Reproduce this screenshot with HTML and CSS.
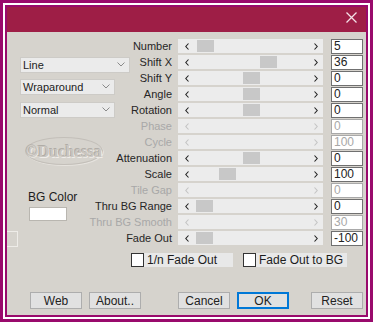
FILE: index.html
```html
<!DOCTYPE html>
<html>
<head>
    <meta name="viewport" content="width=device-width, initial-scale=1.0">
    <title>Line Filter</title>
    <link rel="stylesheet" href="styles.css">
</head>
<body>
<div class="frame">
  <div class="frame-inner">
    <div class="window">
      <div class="titlebar">
        <svg class="close" width="11" height="11" viewBox="0 0 11 11">
          <path d="M0.5 0.5 L10.5 10.5 M10.5 0.5 L0.5 10.5" stroke="#f4e1e7" stroke-width="1.3" fill="none"/>
        </svg>
      </div>
      <div class="body">
        <div class="main">
          <div class="left">
            <div class="select line-sel"><span>Line</span><svg width="8" height="5" viewBox="0 0 8 5"><path d="M0.5 0.5 L4 4 L7.5 0.5" stroke="#8a8a8a" fill="none"/></svg></div>
            <div class="select wrap-sel"><span>Wraparound</span><svg width="8" height="5" viewBox="0 0 8 5"><path d="M0.5 0.5 L4 4 L7.5 0.5" stroke="#8a8a8a" fill="none"/></svg></div>
            <div class="select normal-sel"><span>Normal</span><svg width="8" height="5" viewBox="0 0 8 5"><path d="M0.5 0.5 L4 4 L7.5 0.5" stroke="#8a8a8a" fill="none"/></svg></div>
            <div class="logo"><span>©Duchessa</span></div>
            <div class="bg-label">BG Color</div>
            <div class="swatch"></div>
            <div class="stub"></div>
          </div>

          <div class="params">
            <div class="row">
              <div class="label">Number</div>
              <div class="slider"><svg class="arr" width="4" height="7" viewBox="0 0 4 7"><path d="M3.5 0.5 L0.8 3.5 L3.5 6.5" stroke="#222" stroke-width="1.1" fill="none"/></svg><span class="thumb" style="left:19px"></span><svg class="arr" width="4" height="7" viewBox="0 0 4 7"><path d="M0.5 0.5 L3.2 3.5 L0.5 6.5" stroke="#222" stroke-width="1.1" fill="none"/></svg></div>
              <div class="value">5</div>
            </div>
            <div class="row">
              <div class="label">Shift X</div>
              <div class="slider"><svg class="arr" width="4" height="7" viewBox="0 0 4 7"><path d="M3.5 0.5 L0.8 3.5 L3.5 6.5" stroke="#222" stroke-width="1.1" fill="none"/></svg><span class="thumb" style="left:82px"></span><svg class="arr" width="4" height="7" viewBox="0 0 4 7"><path d="M0.5 0.5 L3.2 3.5 L0.5 6.5" stroke="#222" stroke-width="1.1" fill="none"/></svg></div>
              <div class="value">36</div>
            </div>
            <div class="row">
              <div class="label">Shift Y</div>
              <div class="slider"><svg class="arr" width="4" height="7" viewBox="0 0 4 7"><path d="M3.5 0.5 L0.8 3.5 L3.5 6.5" stroke="#222" stroke-width="1.1" fill="none"/></svg><span class="thumb" style="left:65px"></span><svg class="arr" width="4" height="7" viewBox="0 0 4 7"><path d="M0.5 0.5 L3.2 3.5 L0.5 6.5" stroke="#222" stroke-width="1.1" fill="none"/></svg></div>
              <div class="value">0</div>
            </div>
            <div class="row">
              <div class="label">Angle</div>
              <div class="slider"><svg class="arr" width="4" height="7" viewBox="0 0 4 7"><path d="M3.5 0.5 L0.8 3.5 L3.5 6.5" stroke="#222" stroke-width="1.1" fill="none"/></svg><span class="thumb" style="left:65px"></span><svg class="arr" width="4" height="7" viewBox="0 0 4 7"><path d="M0.5 0.5 L3.2 3.5 L0.5 6.5" stroke="#222" stroke-width="1.1" fill="none"/></svg></div>
              <div class="value">0</div>
            </div>
            <div class="row">
              <div class="label">Rotation</div>
              <div class="slider"><svg class="arr" width="4" height="7" viewBox="0 0 4 7"><path d="M3.5 0.5 L0.8 3.5 L3.5 6.5" stroke="#222" stroke-width="1.1" fill="none"/></svg><span class="thumb" style="left:65px"></span><svg class="arr" width="4" height="7" viewBox="0 0 4 7"><path d="M0.5 0.5 L3.2 3.5 L0.5 6.5" stroke="#222" stroke-width="1.1" fill="none"/></svg></div>
              <div class="value">0</div>
            </div>
            <div class="row off">
              <div class="label">Phase</div>
              <div class="slider"><svg class="arr" width="4" height="7" viewBox="0 0 4 7"><path d="M3.5 0.5 L0.8 3.5 L3.5 6.5" stroke="#c4c4c4" stroke-width="1.1" fill="none"/></svg><svg class="arr" width="4" height="7" viewBox="0 0 4 7"><path d="M0.5 0.5 L3.2 3.5 L0.5 6.5" stroke="#c4c4c4" stroke-width="1.1" fill="none"/></svg></div>
              <div class="value">0</div>
            </div>
            <div class="row off">
              <div class="label">Cycle</div>
              <div class="slider"><svg class="arr" width="4" height="7" viewBox="0 0 4 7"><path d="M3.5 0.5 L0.8 3.5 L3.5 6.5" stroke="#c4c4c4" stroke-width="1.1" fill="none"/></svg><svg class="arr" width="4" height="7" viewBox="0 0 4 7"><path d="M0.5 0.5 L3.2 3.5 L0.5 6.5" stroke="#c4c4c4" stroke-width="1.1" fill="none"/></svg></div>
              <div class="value">100</div>
            </div>
            <div class="row">
              <div class="label">Attenuation</div>
              <div class="slider"><svg class="arr" width="4" height="7" viewBox="0 0 4 7"><path d="M3.5 0.5 L0.8 3.5 L3.5 6.5" stroke="#222" stroke-width="1.1" fill="none"/></svg><span class="thumb" style="left:65px"></span><svg class="arr" width="4" height="7" viewBox="0 0 4 7"><path d="M0.5 0.5 L3.2 3.5 L0.5 6.5" stroke="#222" stroke-width="1.1" fill="none"/></svg></div>
              <div class="value">0</div>
            </div>
            <div class="row">
              <div class="label">Scale</div>
              <div class="slider"><svg class="arr" width="4" height="7" viewBox="0 0 4 7"><path d="M3.5 0.5 L0.8 3.5 L3.5 6.5" stroke="#222" stroke-width="1.1" fill="none"/></svg><span class="thumb" style="left:41px"></span><svg class="arr" width="4" height="7" viewBox="0 0 4 7"><path d="M0.5 0.5 L3.2 3.5 L0.5 6.5" stroke="#222" stroke-width="1.1" fill="none"/></svg></div>
              <div class="value">100</div>
            </div>
            <div class="row off">
              <div class="label">Tile Gap</div>
              <div class="slider"><svg class="arr" width="4" height="7" viewBox="0 0 4 7"><path d="M3.5 0.5 L0.8 3.5 L3.5 6.5" stroke="#c4c4c4" stroke-width="1.1" fill="none"/></svg><svg class="arr" width="4" height="7" viewBox="0 0 4 7"><path d="M0.5 0.5 L3.2 3.5 L0.5 6.5" stroke="#c4c4c4" stroke-width="1.1" fill="none"/></svg></div>
              <div class="value">0</div>
            </div>
            <div class="row">
              <div class="label">Thru BG Range</div>
              <div class="slider"><svg class="arr" width="4" height="7" viewBox="0 0 4 7"><path d="M3.5 0.5 L0.8 3.5 L3.5 6.5" stroke="#222" stroke-width="1.1" fill="none"/></svg><span class="thumb" style="left:18px"></span><svg class="arr" width="4" height="7" viewBox="0 0 4 7"><path d="M0.5 0.5 L3.2 3.5 L0.5 6.5" stroke="#222" stroke-width="1.1" fill="none"/></svg></div>
              <div class="value">0</div>
            </div>
            <div class="row off">
              <div class="label">Thru BG Smooth</div>
              <div class="slider"><svg class="arr" width="4" height="7" viewBox="0 0 4 7"><path d="M3.5 0.5 L0.8 3.5 L3.5 6.5" stroke="#c4c4c4" stroke-width="1.1" fill="none"/></svg><svg class="arr" width="4" height="7" viewBox="0 0 4 7"><path d="M0.5 0.5 L3.2 3.5 L0.5 6.5" stroke="#c4c4c4" stroke-width="1.1" fill="none"/></svg></div>
              <div class="value">30</div>
            </div>
            <div class="row">
              <div class="label">Fade Out</div>
              <div class="slider"><svg class="arr" width="4" height="7" viewBox="0 0 4 7"><path d="M3.5 0.5 L0.8 3.5 L3.5 6.5" stroke="#222" stroke-width="1.1" fill="none"/></svg><span class="thumb" style="left:18px"></span><svg class="arr" width="4" height="7" viewBox="0 0 4 7"><path d="M0.5 0.5 L3.2 3.5 L0.5 6.5" stroke="#222" stroke-width="1.1" fill="none"/></svg></div>
              <div class="value">-100</div>
            </div>
          </div>
        </div>

        <div class="checks">
          <label class="check c1"><span class="box"></span>1/n Fade Out</label>
          <label class="check c2"><span class="box"></span>Fade Out to BG</label>
        </div>

        <div class="buttons">
          <button class="btn web">Web</button>
          <button class="btn">About..</button>
          <button class="btn cancel">Cancel</button>
          <button class="btn ok">OK</button>
          <button class="btn reset">Reset</button>
        </div>
      </div>
    </div>
  </div>
</div>
</body>
</html>
```

FILE: styles.css
```css
body {
    margin: 0;
    font-family: "Liberation Sans", Arial, sans-serif;
    font-size: 11px;
    color: #1c1c1c;
}
.frame {
    width: 373px;
    height: 322px;
    box-sizing: border-box;
    border: 3px solid #990a6c;
}
.frame-inner {
    border: 2px solid #fff;
}
.window {
    border: 2px solid #990a6c;
    background: #d6d3cd;
    height: 308px;
    display: flex;
    flex-direction: column;
}
.titlebar {
    height: 25px;
    flex: none;
    background: #9e1e46;
    display: flex;
    justify-content: flex-end;
    align-items: flex-start;
    padding-right: 9px;
}
.close {
    margin-top: 5px;
}
.body {
    flex: 1;
    padding: 7px 3px 0 0;
}

/* zone principale : panneau gauche + grille des paramètres */
.main {
    display: grid;
    grid-template-rows: 208px;
}
.left, .params {
    grid-area: 1 / 1;
}
.params {
    justify-self: end;
}
.left {
    justify-self: start;
    display: flex;
    flex-direction: column;
    align-items: flex-start;
}
.select {
    display: flex;
    justify-content: space-between;
    align-items: center;
    box-sizing: border-box;
    height: 17px;
    margin-left: 13px;
    padding: 0 4px 0 2px;
    background: #ebebeb;
    border: 1px solid #cdcbc7;
    color: #222;
}
.line-sel { width: 110px; margin-top: 18px; }
.wrap-sel { width: 95px; margin-top: 6px; }
.normal-sel { width: 95px; margin-top: 7px; }

.logo {
    margin: 19px 0 0 18px;
    width: 78px;
    height: 30px;
    box-sizing: border-box;
    border: 1px solid #c3bfb9;
    border-radius: 50%;
    box-shadow: 1px 1px 0 #e6e3de;
    display: flex;
    align-items: center;
    justify-content: center;
}
.logo span {
    font-family: "Liberation Serif", serif;
    font-weight: bold;
    font-size: 16px;
    color: #cac6c0;
    text-shadow: -1px -1px 0 #b0aca6, 1px 1px 0 #f0ede9;
    margin-top: 2px;
}
.bg-label {
    margin: 25px 0 0 21px;
    font-size: 12px;
    line-height: 14px;
}
.swatch {
    margin: 3px 0 0 22px;
    width: 38px;
    height: 15px;
    box-sizing: border-box;
    background: #fff;
    border: 1px solid #b9b6b0;
}
.stub {
    margin-top: 10px;
    width: 11px;
    height: 17px;
    box-sizing: border-box;
    border: 1px solid #eeece8;
    border-left: none;
}

.row {
    display: grid;
    grid-template-columns: 106px 145px 40px;
    height: 16px;
    align-items: start;
}
.label {
    text-align: right;
    padding-right: 6px;
    line-height: 14px;
    white-space: nowrap;
    color: #262626;
}
.slider {
    position: relative;
    height: 14px;
    background: #ececec;
    display: flex;
    justify-content: space-between;
    align-items: center;
    padding: 0 5px 0 7px;
}
.thumb {
    position: absolute;
    top: 1px;
    width: 17px;
    height: 12px;
    background: #c8c8c8;
}
.value {
    margin-left: 8px;
    width: 32px;
    height: 15px;
    box-sizing: border-box;
    background: #fff;
    border: 1px solid #707070;
    padding-left: 2px;
    font-size: 12px;
    line-height: 13px;
    color: #222;
}
.off .label,
.off .value {
    color: #a8a8a8;
}
.off .value {
    border-color: #a9a9a9;
}

.checks {
    display: flex;
    gap: 10px;
    margin: 6px 0 0 124px;
}
.check {
    display: flex;
    align-items: center;
    height: 14px;
    background: #e8e8e8;
    font-size: 12px;
}
.c1 { width: 102px; }
.c2 { width: 104px; }
.box {
    width: 13px;
    height: 14px;
    box-sizing: border-box;
    background: #fff;
    border: 1px solid #333;
    margin-right: 3px;
}

.buttons {
    display: flex;
    margin-top: 25px;
    padding-left: 23px;
}
.btn {
    width: 52px;
    height: 17px;
    box-sizing: border-box;
    padding: 0;
    margin-right: 7px;
    background: #e1e1e1;
    border: 1px solid #adadad;
    font-family: "Liberation Sans", Arial, sans-serif;
    font-size: 12px;
    color: #222;
}
.cancel { margin-left: 30px; }
.ok {
    border: 1px solid #0078d7;
    box-shadow: inset 0 0 0 1px #0078d7;
    margin-right: 22px;
}
.reset { margin-right: 0; }
```
